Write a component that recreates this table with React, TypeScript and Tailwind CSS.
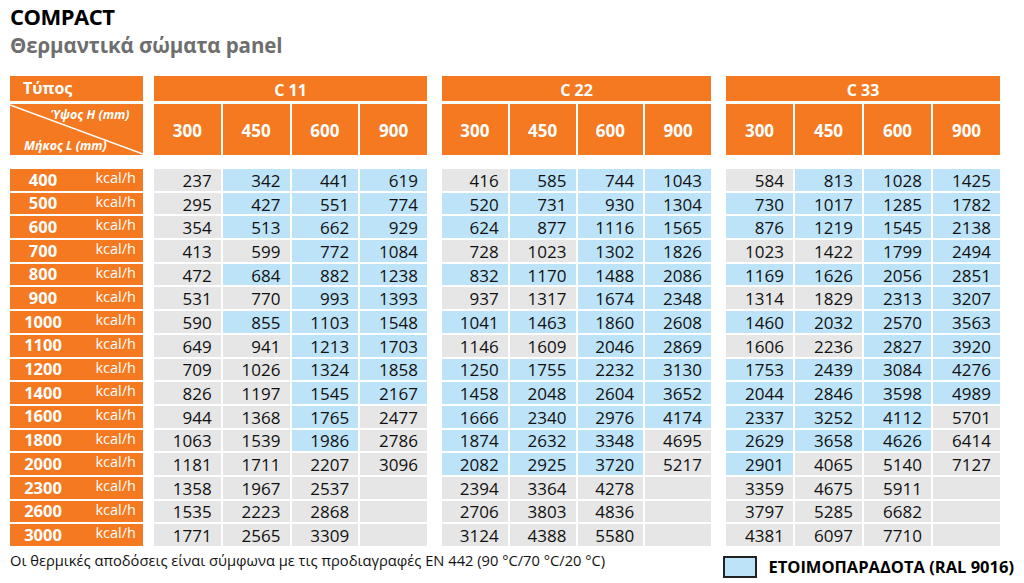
const ROWS = [400, 500, 600, 700, 800, 900, 1000, 1100, 1200, 1400, 1600, 1800, 2000, 2300, 2600, 3000];

type Group = {
  name: string;
  width: string;
  data: (number | null)[][];
  blue: string[];
};

const GROUPS: Group[] = [
  {
    name: "C 11",
    width: "w-[273px] ml-[11px]",
    data: [
      [237, 342, 441, 619], [295, 427, 551, 774], [354, 513, 662, 929], [413, 599, 772, 1084],
      [472, 684, 882, 1238], [531, 770, 993, 1393], [590, 855, 1103, 1548], [649, 941, 1213, 1703],
      [709, 1026, 1324, 1858], [826, 1197, 1545, 2167], [944, 1368, 1765, 2477], [1063, 1539, 1986, 2786],
      [1181, 1711, 2207, 3096], [1358, 1967, 2537, null], [1535, 2223, 2868, null], [1771, 2565, 3309, null],
    ],
    blue: ["0111", "0111", "0111", "0011", "0111", "0011", "0111", "0011", "0011", "0011", "0010", "0010", "0000", "0000", "0000", "0000"],
  },
  {
    name: "C 22",
    width: "w-[269px] ml-[15px]",
    data: [
      [416, 585, 744, 1043], [520, 731, 930, 1304], [624, 877, 1116, 1565], [728, 1023, 1302, 1826],
      [832, 1170, 1488, 2086], [937, 1317, 1674, 2348], [1041, 1463, 1860, 2608], [1146, 1609, 2046, 2869],
      [1250, 1755, 2232, 3130], [1458, 2048, 2604, 3652], [1666, 2340, 2976, 4174], [1874, 2632, 3348, 4695],
      [2082, 2925, 3720, 5217], [2394, 3364, 4278, null], [2706, 3803, 4836, null], [3124, 4388, 5580, null],
    ],
    blue: ["0111", "1111", "1111", "0011", "1111", "0011", "1111", "0011", "1111", "1111", "1111", "1110", "1110", "0000", "0000", "0000"],
  },
  {
    name: "C 33",
    width: "w-[274px] ml-[15px]",
    data: [
      [584, 813, 1028, 1425], [730, 1017, 1285, 1782], [876, 1219, 1545, 2138], [1023, 1422, 1799, 2494],
      [1169, 1626, 2056, 2851], [1314, 1829, 2313, 3207], [1460, 2032, 2570, 3563], [1606, 2236, 2827, 3920],
      [1753, 2439, 3084, 4276], [2044, 2846, 3598, 4989], [2337, 3252, 4112, 5701], [2629, 3658, 4626, 6414],
      [2901, 4065, 5140, 7127], [3359, 4675, 5911, null], [3797, 5285, 6682, null], [4381, 6097, 7710, null],
    ],
    blue: ["0111", "1111", "1111", "0011", "1111", "0011", "1111", "0011", "1111", "1111", "1110", "1110", "1000", "0000", "0000", "0000"],
  },
];

const HEIGHTS = ["300", "450", "600", "900"];

const LabelColumn = () => (
  <div className="w-[133px] flex flex-col">
    <div className="h-[25px] bg-[#f47920] text-white font-bold text-[16px] leading-[25px] pl-[13px]">Τύπος</div>
    <div className="relative mt-[3px] h-[51px] bg-[#f47920] text-white italic font-bold text-[12.5px]">
      <svg className="absolute inset-0" width="133" height="51" viewBox="0 0 133 51">
        <line x1="0" y1="1" x2="133" y2="50" stroke="#ffffff" strokeWidth="1.6" />
      </svg>
      <span className="absolute left-[41px] top-[3px] leading-[15px]">Ύψος H (mm)</span>
      <span className="absolute left-[14px] top-[34px] leading-[15px]">Μήκος L (mm)</span>
    </div>
    <div className="mt-[14px] flex flex-col gap-[2px]">
      {ROWS.map((r) => (
        <div key={r} className="h-[21.7px] bg-[#f47920] text-white flex items-center">
          <span className="w-[66px] text-center font-bold text-[16.5px] leading-none">{r}</span>
          <span className="ml-auto pr-[7px] text-[14.5px] leading-none -mt-[3px]">kcal/h</span>
        </div>
      ))}
    </div>
  </div>
);

const GroupColumn = ({ group }: { group: Group }) => (
  <div className={`${group.width} flex flex-col`}>
    <div className="h-[25px] bg-[#f47920] text-white font-bold text-[16px] leading-[28px] text-center">
      {group.name}
    </div>
    <div className="mt-[3px] h-[51px] grid grid-cols-4 gap-[2px]">
      {HEIGHTS.map((h) => (
        <div key={h} className="bg-[#f47920] text-white font-bold text-[17px] flex items-center justify-center pt-[2px]">
          {h}
        </div>
      ))}
    </div>
    <div className="mt-[14px] flex flex-col gap-[2px]">
      {group.data.map((row, i) => (
        <div key={i} className="h-[21.7px] grid grid-cols-4 gap-[2px]">
          {row.map((v, j) => (
            <div
              key={j}
              className={`${group.blue[i][j] === "1" ? "bg-[#bde3f8]" : "bg-[#e6e6e6]"} text-[#111111] text-[17px] leading-none flex items-center justify-end pr-[9px] pt-[1px]`}
            >
              {v ?? ""}
            </div>
          ))}
        </div>
      ))}
    </div>
  </div>
);

export default function App() {
  return (
    <div
      className="w-[1024px] h-[583px] bg-white px-[10px] overflow-hidden"
      style={{ fontFamily: '"Open Sans", "Noto Sans", sans-serif' }}
    >
      <div className="pt-[2px] h-[76px]">
        <h1 className="text-[22px] font-bold text-black leading-[28px] tracking-[-0.5px]">COMPACT</h1>
        <h2 className="text-[20.5px] font-bold text-[#6e6e6e] leading-[30px] tracking-[-0.1px]">
          Θερμαντικά σώματα panel
        </h2>
      </div>
      <div className="flex">
        <LabelColumn />
        {GROUPS.map((g) => (
          <GroupColumn key={g.name} group={g} />
        ))}
      </div>
      <div className="flex items-start mt-[5px]">
        <p className="text-[14.7px] leading-[18px] text-[#111111]">
          Οι θερμικές αποδόσεις είναι σύμφωνα με τις προδιαγραφές EN 442 (90 °C/70 °C/20 °C)
        </p>
        <div className="ml-auto flex items-center mt-[5px]">
          <div className="w-[34px] h-[22px] border-2 border-[#222222] bg-[#bde3f8]" />
          <span className="ml-[11px] text-[16.5px] font-bold text-black leading-none">ΕΤΟΙΜΟΠΑΡΑΔΟΤΑ (RAL 9016)</span>
        </div>
      </div>
    </div>
  );
}
